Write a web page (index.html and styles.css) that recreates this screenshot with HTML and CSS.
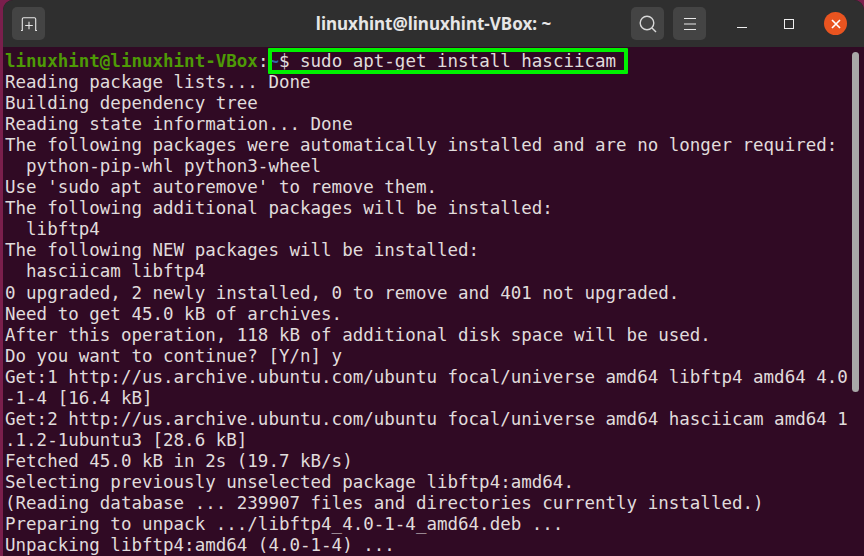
FILE: index.html
```html
<!DOCTYPE html>
<html lang="en">
<head>
<meta charset="utf-8">
<title>linuxhint@linuxhint-VBox: ~</title>
<link rel="stylesheet" href="styles.css">
</head>
<body>
<div class="window">
  <header class="titlebar">
    <button class="tb-btn new-tab" aria-label="New tab">
      <svg width="18" height="18" viewBox="0 0 18 18" fill="none" stroke="#e8e8e8" stroke-width="1.1"><path d="M1 15.5h1.3V4c0-.9.4-1.3 1.3-1.3h10.8c.9 0 1.3.4 1.3 1.3v11.5H17"/><path d="M9 6.7v7.6M5.2 10.5h7.6"/></svg>
    </button>
    <div class="title">linuxhint@linuxhint-VBox: ~</div>
    <div class="tb-right">
      <button class="tb-btn" aria-label="Search">
        <svg width="20" height="20" viewBox="0 0 20 20" fill="none" stroke="#d8d8d8" stroke-width="1.4"><circle cx="9" cy="9" r="6.8"/><path d="M14 14l4 4"/></svg>
      </button>
      <button class="tb-btn" aria-label="Menu">
        <svg width="14" height="14" viewBox="0 0 14 14" fill="none" stroke="#e8e8e8" stroke-width="1.2"><path d="M1 1.5h12M1 7h12M1 12.5h12"/></svg>
      </button>
      <div class="win-controls">
        <span class="minimize"></span>
        <span class="maximize"></span>
        <span class="close">
          <svg width="10" height="10" viewBox="0 0 10 10" fill="none" stroke="#fff" stroke-width="1.7"><path d="M1 1l8 8M9 1l-8 8"/></svg>
        </span>
      </div>
    </div>
  </header>
  <main class="terminal">
<pre class="output"><span class="user">linuxhint@linuxhint-VBox</span>:<span class="path">~</span>$ sudo apt-get install hasciicam
Reading package lists... Done
Building dependency tree
Reading state information... Done
The following packages were automatically installed and are no longer required:
  python-pip-whl python3-wheel
Use 'sudo apt autoremove' to remove them.
The following additional packages will be installed:
  libftp4
The following NEW packages will be installed:
  hasciicam libftp4
0 upgraded, 2 newly installed, 0 to remove and 401 not upgraded.
Need to get 45.0 kB of archives.
After this operation, 118 kB of additional disk space will be used.
Do you want to continue? [Y/n] y
Get:1 http://us.archive.ubuntu.com/ubuntu focal/universe amd64 libftp4 amd64 4.0
-1-4 [16.4 kB]
Get:2 http://us.archive.ubuntu.com/ubuntu focal/universe amd64 hasciicam amd64 1
.1.2-1ubuntu3 [28.6 kB]
Fetched 45.0 kB in 2s (19.7 kB/s)
Selecting previously unselected package libftp4:amd64.
(Reading database ... 239907 files and directories currently installed.)
Preparing to unpack .../libftp4_4.0-1-4_amd64.deb ...
Unpacking libftp4:amd64 (4.0-1-4) ...</pre>
    <div class="highlight"></div>
    <div class="scrollbar"></div>
  </main>
</div>
</body>
</html>
```
FILE: styles.css
```css
* { box-sizing: border-box; }
html, body { margin: 0; height: 100%; }
body {
  background: #7a1f4c;
  overflow: hidden;
  padding-left: 3px;
}
.window {
  height: 556px;
  display: flex;
  flex-direction: column;
  border-radius: 10px 10px 0 0;
  overflow: hidden;
  background: #300a24;
}
.titlebar {
  height: 47px;
  flex: none;
  background: #2f2f2f;
  display: flex;
  align-items: center;
  padding: 0 17px 0 9px;
  position: relative;
}
.tb-btn {
  width: 33px;
  height: 33px;
  border: none;
  border-radius: 5px;
  background: #444444;
  display: flex;
  align-items: center;
  justify-content: center;
  padding: 0;
}
.title {
  position: absolute;
  left: 0;
  right: 0;
  top: 0;
  text-align: center;
  font: bold 17px/47px "Noto Sans", sans-serif;
  color: #e6e6e6;
  pointer-events: none;
}
.tb-right {
  margin-left: auto;
  display: flex;
  align-items: center;
  gap: 9px;
  position: relative;
}
.win-controls {
  display: flex;
  align-items: center;
  margin-left: 22px;
}
.minimize {
  width: 10px;
  height: 0;
  border-top: 1px solid #eee;
  margin-top: 8px;
  margin-right: 37px;
}
.maximize {
  width: 10px;
  height: 10px;
  border: 1px solid #eee;
  margin-right: 30px;
}
.close {
  width: 23px;
  height: 23px;
  border-radius: 50%;
  background: #e95420;
  display: flex;
  align-items: center;
  justify-content: center;
}
.terminal {
  flex: 1;
  position: relative;
  overflow: hidden;
  padding: 4px 0 0 2px;
}
.output {
  margin: 0;
  font: 17.5px/21.05px "DejaVu Sans Mono", monospace;
  color: #e0dcdc;
  white-space: pre;
}
.user { color: #4e9a06; font-weight: bold; }
.path { color: #3465a4; font-weight: bold; }
.highlight {
  position: absolute;
  left: 265px;
  top: 1px;
  width: 360px;
  height: 26px;
  border: 4px solid #00f000;
  border-radius: 1px;
}
.scrollbar {
  position: absolute;
  top: 5px;
  right: 5px;
  width: 7px;
  height: 340px;
  border-radius: 4px;
  background: #a8a8a8;
}
```
